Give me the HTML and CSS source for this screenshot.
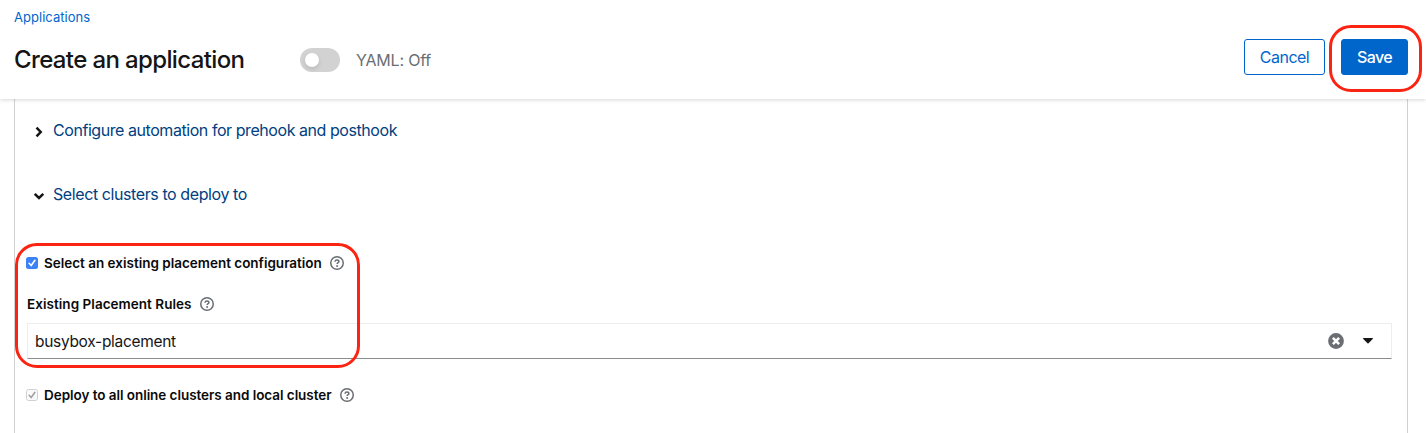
FILE: index.html
```html
<!DOCTYPE html>
<html lang="en">
<head>
<meta charset="utf-8">
<title>Create an application</title>
<link rel="stylesheet" href="styles.css">
</head>
<body>
<svg class="defs" width="0" height="0">
  <symbol id="help" viewBox="0 0 14 14">
    <circle cx="7" cy="7" r="6.25" fill="none" stroke="#6a6e73" stroke-width="1.500"/>
    <path d="M5 5.700C5.100 4.600 5.900 4.100 7 4.100c1.200 0 1.900 .6 1.900 1.500C8.900 6.800 7.100 6.700 7.100 8.100" fill="none" stroke="#6a6e73" stroke-width="1.500"/>
    <circle cx="7.100" cy="9.900" r="1" fill="#6a6e73"/>
  </symbol>
</svg>
<header class="header">
  <nav class="breadcrumb"><a class="crumb">Applications</a></nav>
  <div class="title-row">
    <h1 class="title">Create an application</h1>
    <span class="switch"><span class="knob"></span></span>
    <span class="switch-label">YAML: Off</span>
    <div class="actions">
      <button class="btn cancel"><span>Cancel</span></button>
      <button class="btn save"><span>Save</span></button>
    </div>
  </div>
</header>
<main class="card">
  <div class="section">
    <svg class="chevron" width="12" height="12" viewBox="0 0 12 12"><path d="M3.500 1.700L7.700 6L3.500 10.300" /></svg>
    <span class="section-title t1">Configure automation for prehook and posthook</span>
  </div>
  <div class="section second">
    <svg class="chevron" width="12" height="12" viewBox="0 0 12 12"><path d="M1.700 3.800L6 8L10.300 3.800" /></svg>
    <span class="section-title t2">Select clusters to deploy to</span>
  </div>
  <div class="check-row">
    <svg class="box" width="12" height="12" viewBox="0 0 12 12"><rect width="12" height="12" rx="2.500" fill="#3b82f6"/><path d="M3.100 6.300L5.200 8.500L8.900 3.300" fill="none" stroke="#fff" stroke-width="1.600" stroke-linecap="round"/></svg>
    <span class="label l1">Select an existing placement configuration</span>
    <svg class="help" width="14" height="14"><use href="#help"/></svg>
  </div>
  <div class="field-label">
    <span class="label l2">Existing Placement Rules</span>
    <svg class="help" width="14" height="14"><use href="#help"/></svg>
  </div>
  <div class="select">
    <span class="value">busybox-placement</span>
    <svg class="clear" width="16" height="16" viewBox="0 0 16 16"><circle cx="8" cy="8" r="7.900" fill="#6a6e73"/><path d="M4.900 4.900L11.100 11.100M11.100 4.900L4.900 11.100" stroke="#fff" stroke-width="2.600"/></svg>
    <svg class="caret" width="10" height="6" viewBox="0 0 10 6"><path d="M.5 0H9.500Q10.300 .3 9.700 1L5.500 5.300Q5 5.700 4.500 5.300L.3 1Q-.3 .3 .5 0Z" fill="#151515"/></svg>
  </div>
  <div class="check-row last">
    <svg class="box" width="12" height="12" viewBox="0 0 12 12"><rect x=".5" y=".5" width="11" height="11" rx="2" fill="#fafafa" stroke="#d1d1d1"/><path d="M3.100 6.300L5.200 8.500L8.900 3.300" fill="none" stroke="#a0a0a0" stroke-width="1.500" stroke-linecap="round"/></svg>
    <span class="label l3">Deploy to all online clusters and local cluster</span>
    <svg class="help" width="14" height="14"><use href="#help"/></svg>
  </div>
</main>
<div class="highlight save-highlight"></div>
<div class="highlight form-highlight"></div>
</body>
</html>
```
FILE: styles.css
```css
* { box-sizing: border-box; }
body {
  margin: 0;
  height: 433px;
  overflow: hidden;
  display: flex;
  flex-direction: column;
  background: #fff;
  color: #151515;
  font-family: Inter, "Open Sans", sans-serif;
  font-size: 16px;
  position: relative;
}
.defs { position: absolute; }
svg { display: block; flex: none; }
span, a, h1 { white-space: nowrap; }
.header {
  height: 99px;
  flex: none;
  padding: 7px 18px 0 14px;
  background: #fff;
  box-shadow: 0 1px 4px rgba(3, 3, 3, .16);
  z-index: 1;
}
.breadcrumb { height: 20px; line-height: 20px; font-size: 13px; }
.crumb { color: #06c; letter-spacing: .03px; }
.title-row { display: flex; align-items: center; height: 36px; margin-top: 12px; }
.title {
  width: 286px;
  margin: 5px 0 0;
  font-size: 24px;
  line-height: 30px;
  font-weight: 500;
  letter-spacing: -.63px;
}
.switch {
  width: 40px;
  height: 24px;
  margin-top: 6px;
  padding: 5px;
  border-radius: 12px;
  background: #d2d2d2;
}
.knob {
  display: block;
  width: 14px;
  height: 14px;
  border-radius: 50%;
  background: #fff;
  box-shadow: 0 2px 4px rgba(3, 3, 3, .12);
}
.switch-label { margin: 6px 0 0 16px; line-height: 24px; color: #6a6e73; letter-spacing: -.2px; }
.actions { display: flex; gap: 16px; margin-left: auto; }
.btn {
  height: 36px;
  padding: 0;
  border: 1px solid #06c;
  border-radius: 3px;
  font: inherit;
}
.cancel { width: 81px; background: #fff; color: #06c; letter-spacing: -.5px; }
.save { width: 67px; background: #06c; color: #fff; font-weight: 500; letter-spacing: -.6px; }
.card {
  flex: 1;
  margin: 0 18px 0 14px;
  padding: 19px 15px 0 12px;
  border: solid #d2d2d2;
  border-width: 0 1px;
}
.section { display: flex; align-items: center; gap: 8px; height: 24px; padding-left: 6px; }
.second { margin-top: 40px; }
.chevron { margin-top: 3px; }
.chevron path { fill: none; stroke: #151515; stroke-width: 2.500; }
.section-title { color: #004080; line-height: 24px; }
.t1 { letter-spacing: -.44px; }
.t2 { letter-spacing: -.41px; }
.check-row { display: flex; align-items: center; height: 20px; margin-top: 47px; margin-left: -1px; }
.label { font-size: 13.500px; font-weight: 600; line-height: 20px; color: #0a0a0a; }
.l1 { letter-spacing: -.01px; }
.l2 { letter-spacing: .04px; }
.l3 { letter-spacing: -.05px; }
.check-row .label { margin-left: 6px; }
.help { margin-left: 8px; }
.field-label { display: flex; align-items: center; height: 20px; margin-top: 21px; }
.select {
  display: flex;
  align-items: center;
  height: 36px;
  margin-top: 9px;
  padding: 0 18px 0 7px;
  border: 1px solid #ededed;
  border-bottom-color: #8a8d90;
}
.value { flex: 1; font-size: 15.500px; letter-spacing: -.3px; }
.caret { margin-left: 19px; }
.last { margin-top: 26px; }
.highlight { position: absolute; border: 3px solid #fb2412; z-index: 2; }
.save-highlight { left: 1329px; top: 25px; width: 93px; height: 67px; border-radius: 22px; }
.form-highlight { left: 15px; top: 243px; width: 345px; height: 125px; border-radius: 22px; }
```
